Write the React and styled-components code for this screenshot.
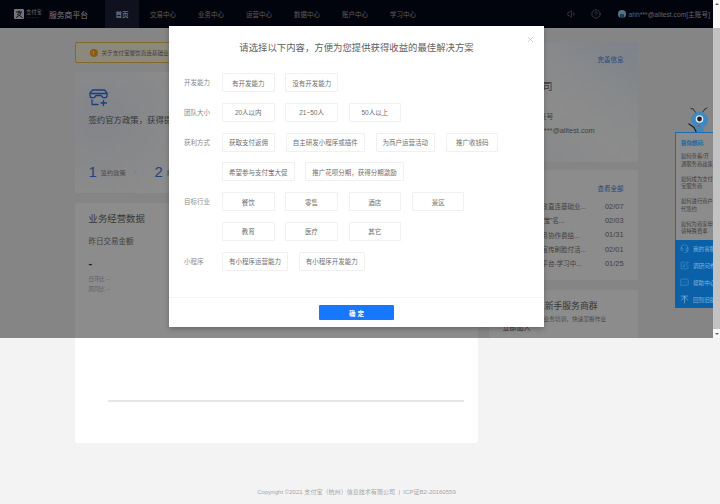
import React from 'react';
import styled, { createGlobalStyle } from 'styled-components';
import { Volume1, CircleHelp, ChevronRight, X, Headset, SquarePen, MessageSquareMore } from 'lucide-react';

const GlobalStyle = createGlobalStyle`
  html, body {
    margin: 0;
    height: 100%;
    overflow: hidden;
    background: #f3f3f3;
    font-family: "Liberation Sans", "Noto Sans CJK SC", sans-serif;
  }
  * { box-sizing: border-box; }
`;

const Shell = styled.div`
  display: flex;
  width: 720px;
  height: 504px;
`;

const Main = styled.div`
  position: relative;
  width: 713px;
  height: 504px;
  overflow: hidden;
  background: #f3f3f3;
`;

const Scrollbar = styled.div`
  display: flex;
  flex-direction: column;
  width: 7px;
  height: 338px;
  background: #c2c2c2;
`;

const ScrollArrow = styled.div`
  display: flex;
  justify-content: center;
  align-items: ${(p) => (p.$up ? 'flex-start' : 'flex-end')};
  height: ${(p) => (p.$up ? '28px' : '9px')};
  margin-top: ${(p) => (p.$up ? '0' : 'auto')};
  padding: 3px 0;
  background: #f8f8f8;
  &::before {
    content: '';
    border-left: 2px solid transparent;
    border-right: 2px solid transparent;
    ${(p) => (p.$up ? 'border-bottom: 2px solid #666;' : 'border-top: 2px solid #666;')}
  }
`;

/* top bar */
const Header = styled.header`
  display: flex;
  align-items: center;
  height: 28px;
  padding-left: 14px;
  background: #040818;
`;

const LogoMark = styled.svg`
  width: 10px;
  height: 10px;
  flex: none;
`;

const LogoWords = styled.div`
  display: flex;
  flex-direction: column;
  margin-left: 2px;
  width: 16px;
  color: #cfcfcf;
  line-height: 1;
`;

const LogoCn = styled.span`
  font-size: 5.2px;
  white-space: nowrap;
`;

const LogoEn = styled.span`
  font-size: 2px;
  letter-spacing: 1.2px;
  margin-top: 1px;
`;

const Platform = styled.div`
  margin-left: 7px;
  width: 56px;
  font-size: 7.8px;
  color: #d8d8d8;
  white-space: nowrap;
`;

const Tabs = styled.nav`
  display: flex;
  height: 100%;
`;

const Tab = styled.a`
  display: flex;
  align-items: center;
  height: 100%;
  padding: 0 11px;
  font-size: 6.5px;
  white-space: nowrap;
  color: ${(p) => (p.$active ? '#ffffff' : '#a0a3ab')};
  background: ${(p) => (p.$active ? '#1d2138' : 'transparent')};
  ${(p) => p.$active && 'padding: 0 10.5px 0 10.5px; width: 34px; justify-content: center;'}
`;

const HeaderRight = styled.div`
  display: flex;
  align-items: center;
  margin-left: auto;
  padding-right: 3px;
  color: #b0b2b8;
`;

const HeaderIcon = styled.span`
  display: flex;
  margin-right: ${(p) => p.$gap}px;
`;

const Avatar = styled.span`
  width: 8px;
  height: 8px;
  border-radius: 50%;
  margin-right: 3px;
  background: radial-gradient(circle at 50% 75%, #3a6f9a 0 30%, #9fd0ee 32%);
`;

const UserName = styled.span`
  font-size: 6.7px;
  white-space: nowrap;
`;

/* page content */
const Content = styled.div`
  display: grid;
  grid-template-columns: 403px 149px;
  column-gap: 11px;
  padding: 14px 0 0 74.5px;
`;

const Column = styled.div`
  display: flex;
  flex-direction: column;
`;

const Notice = styled.div`
  display: flex;
  align-items: center;
  height: 21px;
  padding-left: 14px;
  border: 1px solid #f0c050;
  border-radius: 2px;
  background: #fff7e0;
  font-size: 5.6px;
  color: #777;
  white-space: nowrap;
`;

const NoticeDot = styled.span`
  display: flex;
  align-items: center;
  justify-content: center;
  width: 8px;
  height: 8px;
  margin-right: 4px;
  border-radius: 50%;
  background: #f9a81a;
  color: #fff;
  font-size: 6px;
  font-weight: bold;
`;

const Card = styled.section`
  position: relative;
  height: ${(p) => p.$h}px;
  margin-top: ${(p) => p.$mt || 0}px;
  padding: ${(p) => p.$pad || '0 14px'};
  border-radius: 2px;
  background: ${(p) => p.$bg || '#ffffff'};
  overflow: hidden;
`;

const PolicyIcon = styled.svg`
  display: block;
  width: 19px;
  height: 18px;
`;

const PolicyText = styled.h2`
  margin: 8px 0 0;
  font-size: 8.4px;
  line-height: 11px;
  font-weight: normal;
  color: #666;
  white-space: nowrap;
`;

const Steps = styled.div`
  display: flex;
  margin-top: 37px;
`;

const Step = styled.div`
  display: flex;
  align-items: center;
  width: 66px;
  flex: none;
  color: #888;
  font-size: 6.2px;
  white-space: nowrap;
`;

const StepNum = styled.span`
  margin-right: 4px;
  font-size: 15px;
  line-height: 18px;
  color: #3f7be8;
`;

const StepArrow = styled.span`
  display: flex;
  margin-left: 6px;
  color: #a9c3ee;
`;

const SectionTitle = styled.h3`
  margin: 0;
  font-size: 9.4px;
  line-height: 12px;
  font-weight: normal;
  color: #666;
`;

const SubTitle = styled.div`
  margin-top: 11px;
  font-size: 7.5px;
  line-height: 12px;
  color: #777;
`;

const Amount = styled.div`
  margin-top: 10px;
  font-size: 11px;
  line-height: 11px;
  font-weight: bold;
  color: #333;
`;

const Compare = styled.div`
  margin-top: ${(p) => (p.$first ? '5px' : '0')};
  font-size: 5.4px;
  line-height: 10px;
  color: #b0b0b0;
`;

const ChartLine = styled.div`
  width: 356px;
  height: 1.5px;
  margin: 106px 0 0 19px;
  background: #e6e6e6;
`;

const CardLink = styled.a`
  display: block;
  font-size: 6.5px;
  line-height: 9px;
  text-align: right;
  color: #4a7fe0;
`;

const CompanyName = styled.div`
  margin-top: 16px;
  font-size: 10px;
  line-height: 14px;
  color: #666;
`;

const InfoLine = styled.div`
  margin-top: ${(p) => p.$mt}px;
  font-size: 7.3px;
  line-height: 10px;
  color: #777;
  white-space: nowrap;
`;

const NewsRow = styled.div`
  display: flex;
  justify-content: space-between;
  height: 14.3px;
  align-items: center;
  font-size: 6.5px;
  color: #777;
  white-space: nowrap;
  &:first-of-type { margin-top: 6px; }
`;

const NewsDate = styled.span`
  font-size: 7.4px;
`;

const GroupTitle = styled.div`
  font-size: 8.8px;
  line-height: 12px;
  color: #666;
  white-space: nowrap;
`;

const GroupText = styled.div`
  margin-top: 3px;
  font-size: 5.7px;
  line-height: 8px;
  color: #888;
  white-space: nowrap;
`;

const GroupAction = styled.div`
  margin: 0 0 0 -7px;
  font-size: 7px;
  line-height: 9px;
  color: #555;
`;

const PageFooter = styled.footer`
  position: absolute;
  left: 0;
  right: 0;
  bottom: 8px;
  text-align: center;
  font-size: 6.05px;
  line-height: 8px;
  color: #a6a6a6;
  white-space: nowrap;
`;

/* dialog */
const Mask = styled.div`
  position: absolute;
  left: 0;
  top: 0;
  width: 100%;
  height: 338px;
  background: rgba(0, 0, 0, 0.45);
`;

const Modal = styled.div`
  position: absolute;
  left: 169px;
  top: 26px;
  display: flex;
  flex-direction: column;
  width: 375px;
  height: 301px;
  padding-top: 15px;
  background: #fff;
  box-shadow: 0 2px 5px rgba(0, 0, 0, 0.25);
`;

const ModalClose = styled.span`
  position: absolute;
  right: 9px;
  top: 8.5px;
  display: flex;
  color: #8a8a8a;
`;

const ModalTitle = styled.h1`
  margin: 0 0 18px;
  font-size: 9.4px;
  line-height: 14px;
  font-weight: normal;
  text-align: center;
  color: #606060;
`;

const Group = styled.div`
  display: flex;
  padding-left: 15px;
  margin-bottom: 10.8px;
`;

const GroupLabel = styled.div`
  width: 38px;
  flex: none;
  font-size: 6.5px;
  line-height: 19px;
  color: #8a8a8a;
`;

const Chips = styled.div`
  display: flex;
  flex-wrap: wrap;
  gap: 10.8px;
  width: 290px;
`;

const Chip = styled.button`
  min-width: 52.5px;
  height: 19px;
  padding: 0 6px;
  border: 1px solid #f0f0f0;
  border-radius: 1px;
  background: #fff;
  font-family: inherit;
  font-size: 6.5px;
  color: #6e6e6e;
  white-space: nowrap;
`;

const ModalFooter = styled.div`
  display: flex;
  justify-content: center;
  align-items: center;
  height: 30px;
  margin-top: auto;
  border-top: 1px solid #f4f4f4;
`;

const Confirm = styled.button`
  width: 75px;
  height: 15px;
  padding: 0;
  border: 0;
  border-radius: 1px;
  background: #1677ff;
  color: #fff;
  font-family: inherit;
  font-size: 6.5px;
  font-weight: bold;
`;

/* floating help widget */
const Widget = styled.aside`
  position: absolute;
  left: 675px;
  top: 107px;
  width: 62px;
`;

const Mascot = styled.svg`
  display: block;
  width: 38px;
  height: 25px;
`;

const WidgetAsk = styled.div`
  height: 108px;
  padding: 6px 5px 0;
  border: 1px solid #1a6db0;
  border-bottom: 0;
  background: #8c8c8c;
`;

const AskTitle = styled.div`
  margin-bottom: 6px;
  font-size: 5.4px;
  line-height: 8px;
  font-weight: bold;
  color: #1763a6;
`;

const AskItem = styled.div`
  width: 32px;
  height: 22.5px;
  font-size: 5.3px;
  line-height: 7.5px;
  color: #3c3c3c;
`;

const WidgetLinks = styled.div`
  display: flex;
  flex-direction: column;
  height: 68px;
  background: #0b61a8;
`;

const WidgetLink = styled.div`
  display: flex;
  align-items: center;
  height: 17px;
  padding-left: 5px;
  font-size: 5.6px;
  color: #7fb2da;
  white-space: nowrap;
`;

const LinkIcon = styled.span`
  display: flex;
  width: 13px;
  flex: none;
`;

const NAV = ['交易中心', '业务中心', '运营中心', '数据中心', '账户中心', '学习中心'];

const NEWS = [
  ['关于餐饮行业政直连基础业...', '02/07'],
  ['关于冒用“支付宝”名...', '02/03'],
  ['关于服务商业务协作费结...', '01/31'],
  ['关于校园商户宣传刷脸付活...', '02/01'],
  ['支付宝服务商平台-学习中...', '01/25'],
];

const ASK = [
  '如何查看/开通服务商政策',
  '如何成为支付宝服务商',
  '如何进行商户代签约',
  '如何为商家申请特殊费率',
];

const GROUPS = [
  ['开发能力', ['有开发能力', '没有开发能力']],
  ['团队大小', ['20人以内', '21~50人', '50人以上']],
  ['获利方式', ['获取支付返佣', '自主研发小程序或插件', '为商户运营活动', '推广收钱码', '希望参与支付宝大促', '推广花呗分期，获得分期激励']],
  ['目标行业', ['餐饮', '零售', '酒店', '景区', '教育', '医疗', '其它']],
  ['小程序', ['有小程序运营能力', '有小程序开发能力']],
];

const BackIcon = () => (
  <svg width="9" height="9" viewBox="0 0 10 10" fill="none" stroke="#7fb2da" strokeWidth="0.8">
    <path d="M1 1.2h8M5 1.2v8M5 1.5 1.5 6M5 1.5 8.5 6" />
  </svg>
);

export default function App() {
  return (
    <Shell>
      <GlobalStyle />
      <Main>
        <Header>
          <LogoMark viewBox="0 0 10 10">
            <rect width="10" height="10" rx="1" fill="#d6d6d6" />
            <path d="M2 3h6M5 1.5V5M2 8.5C4.5 7.5 6.5 6 7 3.5M3 5.5c1.5.3 3.5 1.5 5.5 3" stroke="#040818" strokeWidth="0.9" fill="none" />
          </LogoMark>
          <LogoWords>
            <LogoCn>支付宝</LogoCn>
            <LogoEn>ALIPAY</LogoEn>
          </LogoWords>
          <Platform>服务商平台</Platform>
          <Tabs>
            <Tab $active>首页</Tab>
            {NAV.map((n) => <Tab key={n}>{n}</Tab>)}
          </Tabs>
          <HeaderRight>
            <HeaderIcon $gap={14}><Volume1 size={10} strokeWidth={1.2} /></HeaderIcon>
            <HeaderIcon $gap={17}><CircleHelp size={10} strokeWidth={1.2} /></HeaderIcon>
            <Avatar />
            <UserName>ahh***@alitest.com[主账号]</UserName>
          </HeaderRight>
        </Header>

        <Content>
          <Column>
            <Notice>
              <NoticeDot>!</NoticeDot>
              关于支付宝餐饮直连基础业务的公告
            </Notice>
            <Card $mt={9} $h={121} $pad="17px 14px 0" $bg="radial-gradient(circle at 28px 45px, #eef3fb 0, #f6f8fc 50px, #ffffff 85px)">
              <PolicyIcon viewBox="0 0 19 18" fill="none" stroke="#2f73ea" strokeWidth="1.3" strokeLinecap="round" strokeLinejoin="round">
                <path d="M3.5 1h12l2.5 3v2.5a2.2 2.2 0 0 1-2.2 2.2h-1.6L12 6.5H7L5.3 8.7H3.2A2.2 2.2 0 0 1 1 6.5V4z" />
                <path d="M1.5 4.5h16" />
                <path d="M3 11v4.5h6" />
                <path d="M14.5 11.5v5M12 14h5.5" />
              </PolicyIcon>
              <PolicyText>签约官方政策，获得提升收益的机会</PolicyText>
              <Steps>
                <Step>
                  <StepNum>1</StepNum>签约政策
                  <StepArrow><ChevronRight size={7} strokeWidth={1.2} /></StepArrow>
                </Step>
                <Step>
                  <StepNum>2</StepNum>拓展商户
                </Step>
              </Steps>
            </Card>
            <Card $mt={10} $h={240} $pad="10px 14px 0">
              <SectionTitle>业务经营数据</SectionTitle>
              <SubTitle>昨日交易金额</SubTitle>
              <Amount>-</Amount>
              <Compare $first>日环比 --</Compare>
              <Compare>周同比 --</Compare>
              <ChartLine />
            </Card>
          </Column>

          <Column>
            <Card $h={120} $pad="13px 14px 0" $bg="linear-gradient(215deg, #e2eefb 0, #f6f9fd 30%, #ffffff 55%, #eef4fb 100%)">
              <CardLink>完善信息</CardLink>
              <CompanyName>支付宝公司</CompanyName>
              <InfoLine $mt={18}>支付宝签约账号</InfoLine>
              <InfoLine $mt={4}>登录账号ahh***@alitest.com</InfoLine>
            </Card>
            <Card $mt={8} $h={110} $pad="14px 14px 0">
              <CardLink>查看全部</CardLink>
              {NEWS.map(([t, d]) => (
                <NewsRow key={d + t}><span>{t}</span><NewsDate>{d}</NewsDate></NewsRow>
              ))}
            </Card>
            <Card $mt={10} $h={48} $pad="10px 14px 0 21px">
              <GroupTitle>扫码加入新手服务商群</GroupTitle>
              <GroupText>提供更丰富的业务培训，快速掌握作业</GroupText>
              <GroupAction>立即加入</GroupAction>
            </Card>
          </Column>
        </Content>

        <PageFooter>Copyright ©2021 支付宝（杭州）信息技术有限公司 &nbsp;|&nbsp; ICP证B2-20160559</PageFooter>

        <Mask />

        <Widget>
          <Mascot viewBox="0 0 38 25" fill="none">
            <path d="M21 6 18 2M27 6l3-4M18 2l-2-.5M30 2l2-1" stroke="#2b2f38" strokeWidth="1" strokeLinecap="round" />
            <circle cx="24.5" cy="13" r="8.5" fill="#4188bd" />
            <circle cx="24.5" cy="12" r="3.8" fill="#dfeaf3" />
            <circle cx="24.5" cy="12" r="2.4" fill="#15202e" />
            <path d="M21 19.5h7l1 5.5h-8z" fill="#4188bd" />
            <path d="M14 17l5 3.5M19 20.5l2 4" stroke="#20242c" strokeWidth="1.4" strokeLinecap="round" />
            <circle cx="23.5" cy="19" r="1" fill="#b8474a" />
          </Mascot>
          <WidgetAsk>
            <AskTitle>猜你想问:</AskTitle>
            {ASK.map((q) => <AskItem key={q}>{q}</AskItem>)}
          </WidgetAsk>
          <WidgetLinks>
            <WidgetLink><LinkIcon><Headset size={9} strokeWidth={1} /></LinkIcon>我的客服</WidgetLink>
            <WidgetLink><LinkIcon><SquarePen size={9} strokeWidth={1} /></LinkIcon>调研问卷</WidgetLink>
            <WidgetLink><LinkIcon><MessageSquareMore size={9} strokeWidth={1} /></LinkIcon>帮助中心</WidgetLink>
            <WidgetLink><LinkIcon><BackIcon /></LinkIcon>回到旧版</WidgetLink>
          </WidgetLinks>
        </Widget>

        <Modal>
          <ModalClose><X size={9} strokeWidth={1} /></ModalClose>
          <ModalTitle>请选择以下内容，方便为您提供获得收益的最佳解决方案</ModalTitle>
          {GROUPS.map(([label, items]) => (
            <Group key={label}>
              <GroupLabel>{label}</GroupLabel>
              <Chips>
                {items.map((i) => <Chip key={i}>{i}</Chip>)}
              </Chips>
            </Group>
          ))}
          <ModalFooter>
            <Confirm>确 定</Confirm>
          </ModalFooter>
        </Modal>
      </Main>
      <Scrollbar>
        <ScrollArrow $up />
        <ScrollArrow />
      </Scrollbar>
    </Shell>
  );
}
